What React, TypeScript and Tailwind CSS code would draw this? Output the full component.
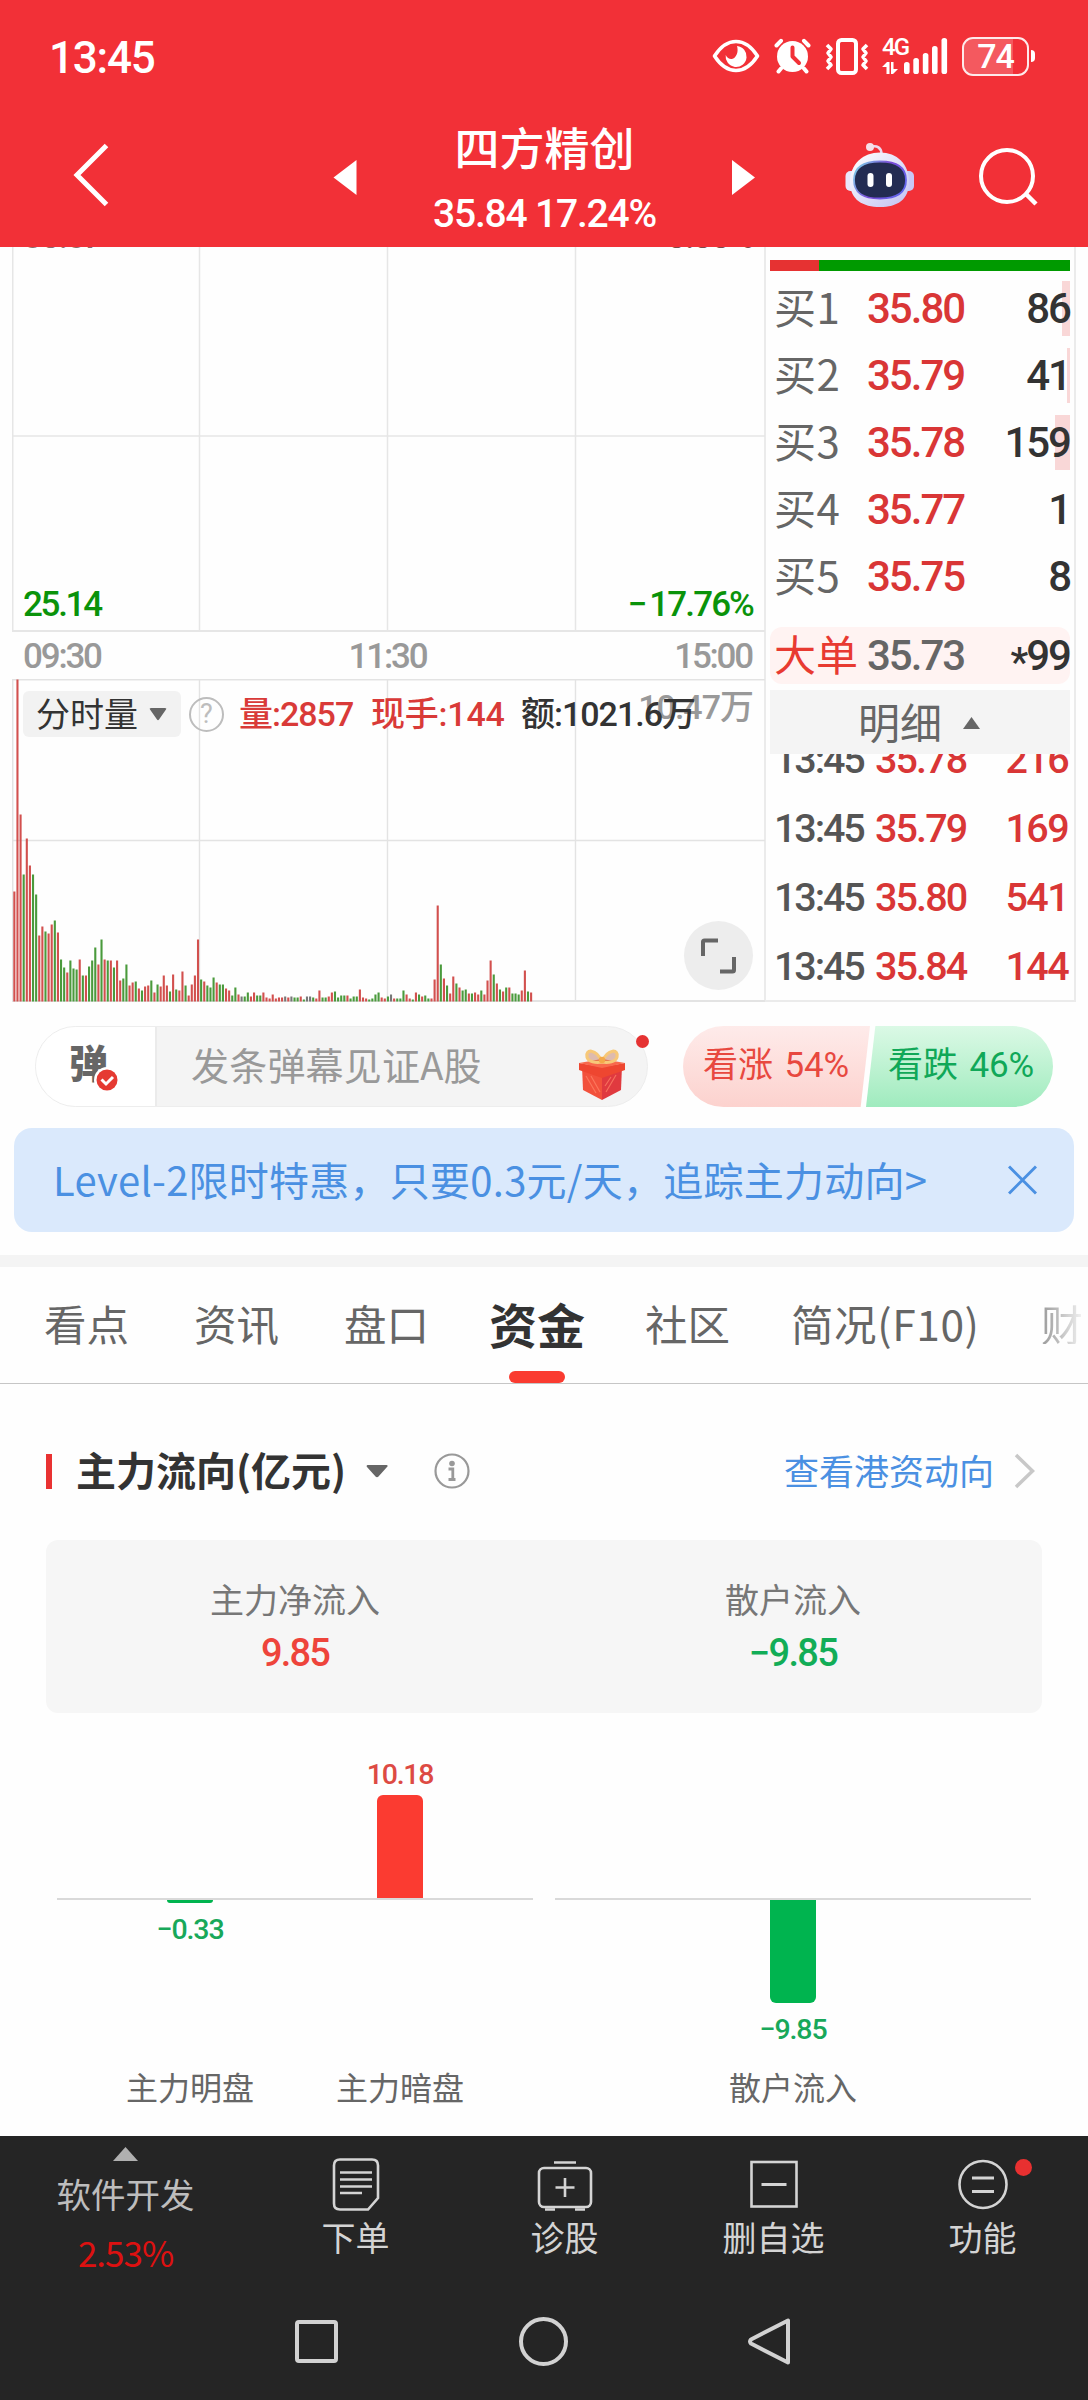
import type { ReactNode } from "react";

const num = "font-[family-name:Roboto,'Noto_Sans_CJK_SC',sans-serif] font-medium";

const bids = [
  { label: "买1", price: "35.80", qty: "86", bar: 8 },
  { label: "买2", price: "35.79", qty: "41", bar: 3 },
  { label: "买3", price: "35.78", qty: "159", bar: 15 },
  { label: "买4", price: "35.77", qty: "1", bar: 0 },
  { label: "买5", price: "35.75", qty: "8", bar: 0 },
];

const ticks = [
  { time: "13:45", price: "35.78", qty: "216" },
  { time: "13:45", price: "35.79", qty: "169" },
  { time: "13:45", price: "35.80", qty: "541" },
  { time: "13:45", price: "35.84", qty: "144" },
];

// one bar per minute: r = up, g = down, k = flat; number is the height
const volume =
  "r110 r322 r187 g127 r163 r136 g127 g107 r66 r75 g70 r68 r77 g81 r69 g42 g34 r29 g41 g33 g32 r42 g26 r26 g35 g41 g54 r37 g62 r42 g41 r41 g34 r41 r21 g23 g37 r16 r19 g20 r13 g11 r15 r16 g21 r9 g17 r15 r26 r16 g10 r27 g12 r11 r30 g16 r6 r17 r26 r62 g22 r20 g16 g14 g24 r19 g17 g17 r13 r11 g6 g14 r7 k5 g5 g9 r5 r9 g6 g6 r9 r4 r3 r7 r3 r4 r4 k5 r4 k5 g4 g4 r5 g2 k5 k5 g4 r3 r11 g4 g4 r5 r9 g10 g4 g6 g6 r6 g3 g5 g5 r12 r4 r3 g2 g3 g7 g9 r4 r3 g5 k7 r3 g3 g3 g11 r7 r3 g2 r9 g7 r5 g6 g3 r3 r22 r96 g37 r23 g16 r8 r25 g18 r14 g11 g12 r8 g8 r9 r7 g11 r7 r21 r41 g27 r18 g12 r10 g14 r14 g8 g8 g7 r11 r31 g10 r9"
    .split(" ")
    .map((s) => ({ kind: s[0], h: Number(s.slice(1)) }));

const barFill: Record<string, string> = { r: "#d2504e", g: "#4a9a3c", k: "#777" };

function StatusBar() {
  return (
    <div className="flex h-[112px] items-center justify-between pl-[49px] pr-[53px] text-white">
      <span className={`${num} mt-[4px] text-[44px] leading-none tracking-[-1.200px]`}>13:45</span>
      <div className="flex items-center">
        <svg className="mr-[14px] h-[34px] w-[48px]" viewBox="0 0 48 34" fill="none">
          <path d="M2.500 17C9 7 16 2.500 24 2.500S39 7 45.500 17C39 27 32 31.500 24 31.500S9 27 2.500 17Z" stroke="#fff" strokeWidth="3.600" strokeLinejoin="round" />
          <path d="M25 7a10.500 10.500 0 1 1-11.300 9c2 4.500 6.500 5 9 2.500 3-3 3.500-7.500 2.300-11.500Z" fill="#fff" />
        </svg>
        <svg className="mr-[14px] h-[36px] w-[37px]" viewBox="0 0 37 36" fill="none" stroke="#fff" strokeLinecap="round">
          <circle cx="18.500" cy="18.500" r="15.500" fill="#fff" stroke="none" />
          <path d="M2.500 7.500L7 2.800M34.500 7.500L30 2.800M7 30.500l-2.500 3M30 30.500l2.500 3" strokeWidth="4" />
          <path d="M18.500 9.500V18.500L25 25" stroke="#f23037" strokeWidth="4" strokeLinejoin="round" />
        </svg>
        <svg className="mr-[13px] h-[37px] w-[44px]" viewBox="0 0 44 37" fill="none" stroke="#fff">
          <rect x="13" y="2" width="18" height="33" rx="3.500" strokeWidth="4" />
          <path d="M2 7l4 4-3 4 3 4-3 4 3 4-4 4M42 7l-4 4 3 4-3 4 3 4-3 4 4 4" strokeWidth="3.600" strokeLinejoin="round" />
        </svg>
        <div className="mr-[14px] flex h-[36px] items-end">
          <div className="flex h-[36px] w-[22px] flex-col justify-between">
            <span className={`${num} text-[24px] leading-[19px] tracking-[-2px]`}>4G</span>
            <svg className="h-[12px] w-[16px]" viewBox="0 0 16 12" fill="#fff">
              <path d="M5 0H7.500V12H4.500V5H0ZM9 0h2.500V7H16L11 12H9Z" />
            </svg>
          </div>
          <svg className="h-[36px] w-[44px]" viewBox="0 0 44 36" fill="#fff">
            <rect x="0" y="24" width="5.600" height="12" rx="2.600" />
            <rect x="9.300" y="20" width="5.600" height="16" rx="2.600" />
            <rect x="18.800" y="15" width="5.600" height="21" rx="2.600" />
            <rect x="28" y="8" width="5.600" height="28" rx="2.600" />
            <rect x="37.500" y="0" width="5.600" height="36" rx="2.600" />
          </svg>
        </div>
        <div className="flex items-center gap-[2px]">
          <div className="relative flex h-[39px] w-[67px] items-center justify-center overflow-hidden rounded-[11px] border-[2.500px] border-white/90">
            <div className="absolute inset-y-0 left-0 w-[49px] bg-white/20" />
            <span className={`${num} relative text-[34px] leading-none tracking-[-1px]`}>74</span>
          </div>
          <div className="h-[12px] w-[4px] rounded-r-full rounded-l-sm bg-white" />
        </div>
      </div>
    </div>
  );
}

function Robot() {
  return (
    <svg className="h-[66px] w-[70px]" viewBox="0 0 70 66" fill="none">
      <defs>
        <linearGradient id="shell" x1="10" y1="10" x2="60" y2="66" gradientUnits="userSpaceOnUse">
          <stop stopColor="#fff" />
          <stop offset="1" stopColor="#c3c2f2" />
        </linearGradient>
        <linearGradient id="rim" x1="8" y1="20" x2="62" y2="55" gradientUnits="userSpaceOnUse">
          <stop stopColor="#7de0ea" />
          <stop offset="0.500" stopColor="#7b4bd8" />
          <stop offset="1" stopColor="#5a6bf0" />
        </linearGradient>
      </defs>
      <path d="M27 4.500c5-1 9 1 9.500 7" stroke="#ecd9ee" strokeWidth="2.600" />
      <circle cx="25" cy="5" r="4" fill="#f6dfe8" />
      <rect x="0.500" y="29" width="12" height="20" rx="5" fill="#e9e6fb" />
      <rect x="57" y="29" width="12" height="20" rx="5" fill="#c9c8f5" />
      <path d="M35 10.500C52 10.500 64 22 64 40 64 58 52 65 35 65S5 58 5 40C5 22 18 10.500 35 10.500Z" fill="url(#shell)" />
      <path d="M35 19.500C52 19.500 61 25 61 38S52 56.500 35 56.500 9 51 9 38 18 19.500 35 19.500Z" fill="#232c52" stroke="url(#rim)" strokeWidth="1.800" />
      <rect x="22.500" y="31" width="6" height="14" rx="3" fill="#fff" />
      <rect x="41" y="31" width="6" height="14" rx="3" fill="#fff" />
    </svg>
  );
}

function TitleBar() {
  return (
    <div className="flex h-[135px] items-center pl-[72px] text-white">
      <svg className="h-[66px] w-[38px] -mt-[9px]" viewBox="0 0 38 66" fill="none">
        <path d="M34.500 3.500L5 33l29.500 29.500" stroke="#fff" strokeWidth="5" />
      </svg>
      <svg className="ml-[223px] -mt-[3px] h-[36px] w-[24px]" viewBox="0 0 24 36">
        <path d="M23.500 0v35L0.500 17.500Z" fill="#fff" />
      </svg>
      <div className="flex w-[375px] flex-col items-center">
        <span className="-mt-[5px] text-[45px] leading-[54px] font-medium">四方精创</span>
        <span className={`${num} mt-[20px] text-[39px] leading-[40px] tracking-[-1.200px]`}>35.84 17.24%</span>
      </div>
      <svg className="-mt-[3px] h-[36px] w-[24px]" viewBox="0 0 24 36">
        <path d="M0 0v35L23 17.500Z" fill="#fff" />
      </svg>
      <div className="-mt-[9px] ml-[89px]">
        <Robot />
      </div>
      <svg className="-mt-[3px] ml-[63px] h-[62px] w-[62px]" viewBox="0 0 62 62" fill="none" stroke="#fff">
        <circle cx="29" cy="29" r="26" strokeWidth="4" />
        <path d="M48 47l10 10" strokeWidth="4.500" />
      </svg>
    </div>
  );
}

function PriceChart() {
  return (
    <div className="relative h-[385px] w-[753px] overflow-hidden">
      <svg className="h-[385px] w-[753px]" viewBox="0 0 753 385" stroke="#e6e6e6" fill="none">
        <path d="M187.500 0V384M375.500 0V384M563.500 0V384M0 189H753" strokeWidth="1.500" />
        <path d="M0.500 0V384M0 384H753" strokeWidth="2" />
      </svg>
      <span className={`${num} absolute left-[11px] top-[-28px] text-[35px] leading-[36px] tracking-[-2.200px] text-[#8a6a6a]`}>30.57</span>
      <span className={`${num} absolute right-[12px] top-[-28px] text-[35px] leading-[36px] tracking-[-1.800px] text-[#7a4a4a]`}>0.00%</span>
      <span className={`${num} absolute left-[11px] top-[340px] text-[35px] leading-[36px] tracking-[-2.300px] text-[#0a930a]`}>25.14</span>
      <span className={`${num} absolute right-[12px] top-[340px] text-[35px] leading-[36px] tracking-[-1.900px] text-[#0a930a]`}>
        <span className="tracking-[2px]">−</span>17.76%
      </span>
    </div>
  );
}

function VolumeChart() {
  return (
    <div className="relative h-[324px] w-[753px]">
      <svg className="h-[324px] w-[753px]" viewBox="0 0 753 324" fill="none">
        <g stroke="#e3e3e3">
          <path d="M187.500 0V322M375.500 0V322M563.500 0V322M0 161.500H753" strokeWidth="1.400" />
          <path d="M0.500 0V322M0 0.500H753M0 322H753" strokeWidth="2" />
        </g>
        {volume.map((v, i) => (
          <rect key={i} x={1.300 + i * 3.113} y={322.500 - v.h} width={2.100} height={v.h} fill={barFill[v.kind]} />
        ))}
      </svg>
      <span className={`${num} absolute right-[12px] top-[10px] text-[34px] leading-[36px] tracking-[-1px] text-[#999]`}>10.47万</span>
      <div className="absolute left-[11px] top-[12px] flex h-[46px] items-center text-[34px] leading-none whitespace-nowrap">
        <div className="flex h-[46px] w-[158px] items-center rounded-md bg-[#f2f2f2] pl-[13px] text-[#333]">
          <span className="-mt-[3px]">分时量</span>
          <svg className="ml-[11px] h-[13px] w-[18px]" viewBox="0 0 18 13">
            <path d="M2 0h14q2 0 1 1.500l-7 10q-1 1.500-2 0l-7-10Q0 0 2 0Z" fill="#666" />
          </svg>
        </div>
        <div className="ml-[8px] flex h-[35px] w-[35px] items-center justify-center rounded-full border-2 border-[#bdbdbd] text-[27px] text-[#bdbdbd]">
          <span className="font-[family-name:Roboto,sans-serif]">?</span>
        </div>
        <span className={`${num} ml-[15px] w-[132px] tracking-[-1px] text-[#d93a38]`}>量:2857</span>
        <span className={`${num} w-[150px] tracking-[-0.200px] text-[#d93a38]`}>现手:144</span>
        <span className={`${num} tracking-[-1px] text-[#333]`}>额:1021.6万</span>
      </div>
      <div className="absolute left-[672px] top-[242px] flex h-[69px] w-[69px] items-center justify-center rounded-full bg-[#ededed]">
        <svg className="h-[36px] w-[37px]" viewBox="0 0 37 36" fill="none" stroke="#666" strokeWidth="4">
          <path d="M3 18V4q0-1.500 1.500-1.500H18M20 33.500H32.500q1.500 0 1.500-1.500V19" />
        </svg>
      </div>
    </div>
  );
}

function OrderBook() {
  return (
    <div className="flex h-[755px] w-[312px] flex-col border-x-2 border-b-2 border-[#ebebeb] pl-[4px] pr-[4px]">
      <div className="mt-[13px] flex h-[11px] w-[300px] shrink-0">
        <div className="w-[49px] bg-[#e63232]" />
        <div className="flex-1 bg-[#009a00]" />
      </div>
      <div className="mt-[4px] flex w-[300px] shrink-0 flex-col">
        {bids.map((b) => (
          <div key={b.label} className="relative flex h-[67px] items-center pl-[4px] leading-none">
            <div className="absolute right-0 top-[6px] h-[55px] bg-[#f9d7d7]" style={{ width: b.bar }} />
            <span className="-mt-[6px] w-[93px] text-[42px] tracking-[0.600px] text-[#666]">{b.label}</span>
            <span className={`${num} text-[42px] tracking-[-2px] text-[#d93636]`}>{b.price}</span>
            <span className={`${num} relative ml-auto text-[42px] tracking-[-2px] text-[#333]`}>{b.qty}</span>
          </div>
        ))}
      </div>
      <div className="mt-[17px] flex h-[57px] w-[300px] shrink-0 items-center rounded-xl bg-[#fff3f2] pl-[4px] leading-none">
        <span className="-mt-[6px] w-[93px] text-[42px] text-[#e83a31]">大单</span>
        <span className={`${num} text-[42px] tracking-[-2px] text-[#666]`}>35.73</span>
        <span className={`${num} ml-auto flex items-center text-[42px] tracking-[-2px] text-[#333]`}>
          <span className="mt-[14px] text-[40px]">*</span>99
        </span>
      </div>
      <div className="mt-[6px] flex h-[64px] w-[300px] shrink-0 items-center bg-[#f4f4f4] pl-[88px]">
        <span className="-mt-[3px] text-[42px] leading-none text-[#666]">明细</span>
        <svg className="ml-[21px] mt-[1px] h-[12px] w-[17px]" viewBox="0 0 17 12">
          <path d="M8.500 0L17 12H0Z" fill="#666" />
        </svg>
      </div>
      <div className="flex min-h-0 w-[300px] flex-1 flex-col justify-end overflow-hidden">
        {ticks.map((t, i) => (
          <div key={i} className={`${num} -mb-px flex h-[70px] shrink-0 items-center pl-[4px] pt-[2px] text-[39.500px] leading-none`}>
            <span className="w-[101px] tracking-[-2.100px] text-[#555]">{t.time}</span>
            <span className="tracking-[-1.900px] text-[#d93636]">{t.price}</span>
            <span className="ml-auto pr-[2px] tracking-[-1.600px] text-[#d93636]">{t.qty}</span>
          </div>
        ))}
      </div>
    </div>
  );
}

function Gift() {
  return (
    <svg className="h-[52px] w-[48px]" viewBox="0 0 48 52">
      <path d="M4 17L24 25V51L5 41Z" fill="#f2513c" />
      <path d="M44 17L24 25V51L43 41Z" fill="#e03a3f" />
      <path d="M1 14L24 18 47 14V21L24 29 1 21Z" fill="#ee4630" />
      <path d="M1 14L24 10 47 14 24 19Z" fill="#f8694c" />
      <path d="M8 27l10 17M13 27l9 16M38 26L28 43M33 28l-6 9" stroke="#ff8568" strokeWidth="1.200" opacity="0.700" />
      <path d="M24 13C18-1 7 0 9 8c1 5 9 6 15 5ZM24 13C30-1 41 0 39 8c-1 5-9 6-15 5Z" fill="#b5502c" fillOpacity="0.350" stroke="#f7c878" strokeWidth="3.200" />
      <circle cx="24" cy="11" r="3.200" fill="#f3a94a" />
    </svg>
  );
}

function DanmakuRow() {
  return (
    <div className="flex h-[81px] items-center pl-[35px]">
      <div className="relative flex h-[81px] w-[613px] items-center overflow-visible rounded-full border border-[#ededed] bg-[#f4f4f4]">
        <div className="flex h-full w-[121px] items-center rounded-l-full border-r-2 border-[#ebebeb] bg-white pl-[33px]">
          <div className="relative -mt-[9px]">
            <span className="text-[39px] leading-none font-black text-[#666]">弹</span>
            <svg className="absolute left-[25px] top-[25px] h-[26px] w-[26px]" viewBox="0 0 26 26">
              <circle cx="13" cy="13" r="13" fill="#fff" />
              <circle cx="13" cy="13" r="10.500" fill="#e53a32" />
              <path d="M7.500 12.500l4.500 4.500 7-7" fill="none" stroke="#fff" strokeWidth="3" />
            </svg>
          </div>
        </div>
        <span className="-mt-[5px] ml-[34px] text-[38px] leading-none tracking-[0.200px] text-[#999]">发条弹幕见证A股</span>
        <div className="absolute left-[542px] top-[22px]">
          <Gift />
        </div>
        <div className="absolute left-[600px] top-[8px] h-[13px] w-[13px] rounded-full bg-[#e53232]" />
      </div>
      <div className="ml-[35px] flex h-[81px] w-[370px] items-center whitespace-nowrap text-[35px] leading-none tracking-[-0.100px] [word-spacing:3px]">
        <div className="flex h-full w-[187px] items-center rounded-l-full bg-linear-to-b from-[#feebea] to-[#fcd2ce] pl-[20px] font-[family-name:Roboto,'Noto_Sans_CJK_SC',sans-serif] text-[#e8483f] [clip-path:polygon(0_0,100%_0,95%_100%,0_100%)]">
          <span className="-mt-[3px]">看涨 54%</span>
        </div>
        <div className="-ml-[4px] flex h-full w-[187px] items-center rounded-r-full bg-linear-to-b from-[#dbf9e6] to-[#9febbe] pl-[22px] font-[family-name:Roboto,'Noto_Sans_CJK_SC',sans-serif] text-[#10a858] [clip-path:polygon(5%_0,100%_0,100%_100%,0_100%)]">
          <span className="-mt-[3px]">看跌 46%</span>
        </div>
      </div>
    </div>
  );
}

function Promo() {
  return (
    <div className="mx-[14px] mt-[21px] flex h-[104px] items-center justify-between rounded-[18px] bg-[#dae9fc] pl-[39px] pr-[37px] text-[#4a90e2]">
      <span className="-mt-[3px] text-[40px] leading-none tracking-[0.250px] whitespace-nowrap">Level-2限时特惠，只要0.3元/天，追踪主力动向&gt;</span>
      <svg className="h-[30px] w-[29px]" viewBox="0 0 29 30" stroke="#4a90e2" strokeWidth="3">
        <path d="M1 1.500l27 27M28 1.500l-27 27" />
      </svg>
    </div>
  );
}

function Tab({ className, children }: { className: string; children: ReactNode }) {
  return <span className={`${className} shrink-0 text-[42.500px] leading-none text-[#666]`}>{children}</span>;
}

function Tabs() {
  return (
    <div className="relative mt-[23px] flex h-[129px] items-center overflow-hidden border-t-[12px] border-b border-t-[#f4f4f4] border-b-[#c6c6c6] pb-[4px] pl-[44px] whitespace-nowrap">
      <Tab className="w-[150px]">看点</Tab>
      <Tab className="w-[150px]">资讯</Tab>
      <Tab className="w-[145px]">盘口</Tab>
      <span className="w-[156px] shrink-0 text-[48px] leading-none font-bold text-[#333]">资金</span>
      <Tab className="w-[146px]">社区</Tab>
      <Tab className="w-[250px] tracking-[0.600px]">简况(F10)</Tab>
      <span className="shrink-0 bg-linear-to-r from-[#999] to-[#f4f4f4] bg-clip-text text-[42px] leading-none text-transparent">财</span>
      <div className="absolute bottom-0 left-[509px] h-[12px] w-[56px] rounded-full bg-[#fa3b30]" />
    </div>
  );
}

function FlowChart() {
  return (
    <div className="flex h-[423px] justify-center gap-[22px] text-[32px] leading-none text-[#666]">
      <div className="relative w-[476px]">
        <div className="absolute inset-x-0 top-[185px] h-[2px] bg-[#d9d9d9]" />
        <div className="absolute left-[110px] top-[187px] flex w-[46px] flex-col items-center">
          <div className="h-[3px] w-[46px] rounded-b-sm bg-[#00b44f]" />
          <span className={`${num} mt-[10px] text-[28.500px] leading-[34px] tracking-[-1.100px] text-[#18a85a]`}>−0.33</span>
        </div>
        <div className="absolute left-[320px] top-[44px] flex w-[46px] flex-col items-center">
          <span className={`${num} mt-px text-[28.500px] leading-[34px] tracking-[-1.200px] text-[#dd4a43]`}>10.18</span>
          <div className="mt-[3px] h-[103px] w-[46px] rounded-t-md bg-[#fb3b31]" />
        </div>
        <span className="absolute left-[69px] top-[357px]">主力明盘</span>
        <span className="absolute left-[279px] top-[357px]">主力暗盘</span>
      </div>
      <div className="relative w-[476px]">
        <div className="absolute inset-x-0 top-[185px] h-[2px] bg-[#d9d9d9]" />
        <div className="absolute left-[215px] top-[187px] flex w-[46px] flex-col items-center">
          <div className="h-[103px] w-[46px] rounded-b-md bg-[#00b44f]" />
          <span className={`${num} mt-[10px] text-[28.500px] leading-[34px] tracking-[-1.100px] text-[#18a85a]`}>−9.85</span>
        </div>
        <span className="absolute left-[174px] top-[357px]">散户流入</span>
      </div>
    </div>
  );
}

function MoneyFlow() {
  return (
    <section className="h-[752px]">
      <div className="flex items-center pl-[46px] pr-[53px] pt-[62px]">
        <div className="mt-[2px] h-[35px] w-[6px] bg-[#e93232]" />
        <h2 className="-mt-[3px] ml-[24px] text-[40px] leading-[52px] font-bold text-[#333]">主力流向(亿元)</h2>
        <svg className="ml-[20px] mt-[1px] h-[13px] w-[22px]" viewBox="0 0 22 13">
          <path d="M1.500 0h19q2 .500.500 2l-8.500 9.500q-1.500 1.500-3 0L1 2Q0 .500 1.500 0Z" fill="#666" />
        </svg>
        <svg className="ml-[46px] h-[36px] w-[36px]" viewBox="0 0 36 36" fill="none" stroke="#999" strokeWidth="2.200">
          <circle cx="18" cy="18" r="16.500" />
          <circle cx="18" cy="10.500" r="2.800" fill="#999" stroke="none" />
          <path d="M14.500 16H18.800V26M14.500 26.500H21.500" strokeWidth="2.800" />
        </svg>
        <span className="-mt-[3px] ml-auto text-[35px] leading-none text-[#4a90e2]">查看港资动向</span>
        <svg className="ml-[20px] h-[36px] w-[21px]" viewBox="0 0 21 36" fill="none" stroke="#c8c8c8" strokeWidth="3.500">
          <path d="M2 2l16.500 16L2 34" />
        </svg>
      </div>
      <div className="mx-[46px] mt-[45px] grid h-[173px] grid-cols-2 rounded-xl bg-[#f6f6f6] pt-[42px] text-center">
        <div className="flex flex-col items-center">
          <span className="text-[34px] leading-[34px] text-[#777]">主力净流入</span>
          <span className={`${num} mt-[17px] text-[38px] leading-[40px] tracking-[-1.800px] text-[#ee443b]`}>9.85</span>
        </div>
        <div className="flex flex-col items-center">
          <span className="text-[34px] leading-[34px] text-[#777]">散户流入</span>
          <span className={`${num} mt-[17px] text-[38px] leading-[40px] tracking-[-1.600px] text-[#12ad57]`}>−9.85</span>
        </div>
      </div>
      <FlowChart />
    </section>
  );
}

function NavItem({ icon, label, dot }: { icon: ReactNode; label: string; dot?: boolean }) {
  return (
    <div className="relative flex w-[209px] flex-col items-center pt-[20px]">
      <svg className="h-[56px] w-[60px]" viewBox="0 0 60 56" fill="none" stroke="#d4d4d4" strokeWidth="2.600">
        {icon}
      </svg>
      <span className="mt-[8px] text-[34px] leading-[34px] text-[#d4d4d4]">{label}</span>
      {dot && <div className="absolute left-[137px] top-[23px] h-[17px] w-[17px] rounded-full bg-[#e83030]" />}
    </div>
  );
}

function BottomBar() {
  return (
    <footer className="h-[264px] bg-[#252525]">
      <div className="flex h-[150px]">
        <div className="flex w-[251px] shrink-0 flex-col items-center pt-[11px]">
          <svg className="h-[14px] w-[25px]" viewBox="0 0 25 14">
            <path d="M12.500 0L25 14H0Z" fill="#b0b0b0" />
          </svg>
          <span className="mt-[15px] text-[34.500px] leading-[35px] text-[#bdbdbd]">软件开发</span>
          <span className="mt-[23px] text-[35px] leading-[35px] tracking-[-1px] text-[#dd1111]">2.53%</span>
        </div>
        <NavItem
          label="下单"
          icon={
            <>
              <path d="M14 3.500H46q6 0 6 6V42L42 53.500H14q-6 0-6-6V9.500q0-6 6-6Z" />
              <path d="M14 16.500H46M14 23.500H46M14 30.500H46M14 37H36" />
            </>
          }
        />
        <NavItem
          label="诊股"
          icon={
            <>
              <rect x="4" y="12" width="52" height="39" rx="5" />
              <path d="M19 6.500H41M30 22V41M20.500 31.500H39.500" />
              <path d="M10 53.500h10M40 53.500h10" />
            </>
          }
        />
        <NavItem
          label="删自选"
          icon={
            <>
              <rect x="7.500" y="6" width="45" height="44.500" />
              <path d="M17.500 28.500H42.500" strokeWidth="3" />
            </>
          }
        />
        <NavItem
          label="功能"
          dot
          icon={
            <>
              <circle cx="30" cy="28.500" r="23.500" />
              <path d="M19 22H41M19 35.500H41" strokeWidth="3" />
            </>
          }
        />
      </div>
      <div className="flex items-center pl-[293px] pt-[30px]">
        <svg className="h-[50px] w-[500px]" viewBox="0 0 500 50" fill="none" stroke="#d2d2d2" strokeWidth="4" strokeLinejoin="round">
          <rect x="4" y="6" width="39" height="39" rx="2" />
          <circle cx="250.500" cy="25.500" r="22.500" />
          <path d="M495 4.500V46.500L458 27.500q-2-2 0-4Z" />
        </svg>
      </div>
    </footer>
  );
}

export default function App() {
  return (
    <div className="h-[2400px] w-[1088px] overflow-hidden bg-[#fefefe] font-[family-name:'Noto_Sans_CJK_SC','Noto_Sans',sans-serif]">
      <header className="h-[247px] bg-[#f23037]">
        <StatusBar />
        <TitleBar />
      </header>
      <div className="flex h-[755px] pl-[12px]">
        <div className="w-[752px]">
          <PriceChart />
          <div className={`${num} flex h-[47px] items-center justify-between pl-[11px] pr-[12px] pt-[2px] text-[35px] leading-none tracking-[-2.200px] text-[#999]`}>
            <span>09:30</span>
            <span>11:30</span>
            <span>15:00</span>
          </div>
          <VolumeChart />
        </div>
        <OrderBook />
      </div>
      <div className="pt-[24px]">
        <DanmakuRow />
      </div>
      <Promo />
      <Tabs />
      <MoneyFlow />
      <BottomBar />
    </div>
  );
}
